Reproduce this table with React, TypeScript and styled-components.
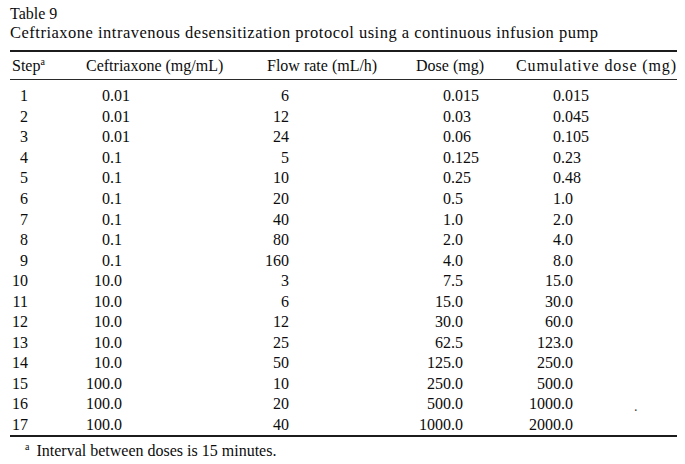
import React from "react";
import styled, { createGlobalStyle } from "styled-components";

const GlobalStyle = createGlobalStyle`
  html, body { margin: 0; padding: 0; background: #ffffff; }
  body { font-family: "Liberation Serif", "Times New Roman", serif; color: #0c0c0c; }
`;

const Page = styled.div`
  width: 685px;
  height: 464px;
  box-sizing: border-box;
  padding: 4px 0 0 10px;
  overflow: hidden;
  font-size: 16px;
`;

const Title = styled.div`
  line-height: 19px;
`;

const Caption = styled.div`
  line-height: 19px;
  font-size: 16.5px;
  letter-spacing: 0.5px;
  white-space: nowrap;
`;

const Table = styled.div`
  width: 667px;
  margin-top: 8px;
  border-top: 2px solid #1c1c1c;
  border-bottom: 2px solid #1c1c1c;
`;

const HeaderRow = styled.div`
  display: grid;
  grid-template-columns: 76px 181px 149px 84px 1fr;
  align-items: center;
  height: 27px;
  border-bottom: 1.5px solid #2a2a2a;
  white-space: nowrap;
`;

const HeadCell = styled.div<{ $right?: boolean; $pad?: number; $spacing?: number }>`
  text-align: ${(p) => (p.$right ? "right" : "left")};
  padding-left: ${(p) => p.$pad ?? 0}px;
  letter-spacing: ${(p) => p.$spacing ?? 0}px;
`;

const Sup = styled.sup`
  font-size: 10px;
  vertical-align: 6px;
  line-height: 0;
`;

const Body = styled.div`
  padding: 6px 0 0;
`;

const Row = styled.div`
  display: flex;
  align-items: center;
  height: 20.56px;
  white-space: nowrap;
`;

const Cell = styled.div<{ $ml: number; $w: number; $end?: boolean }>`
  display: flex;
  justify-content: ${(p) => (p.$end ? "flex-end" : "flex-start")};
  margin-left: ${(p) => p.$ml}px;
  width: ${(p) => p.$w}px;
  flex: none;
`;

const Speck = styled.div`
  margin-left: 61px;
  font-size: 14px;
  color: #444;
  position: relative;
  top: 3px;
`;

const Footnote = styled.div`
  margin-top: 4px;
  line-height: 19px;
  padding-left: 15px;
  white-space: nowrap;
`;

const NoteText = styled.span`
  margin-left: 3px;
`;

type RowData = [string, string, string, string, string];

const rows: RowData[] = [
  ["1", "0.01", "6", "0.015", "0.015"],
  ["2", "0.01", "12", "0.03", "0.045"],
  ["3", "0.01", "24", "0.06", "0.105"],
  ["4", "0.1", "5", "0.125", "0.23"],
  ["5", "0.1", "10", "0.25", "0.48"],
  ["6", "0.1", "20", "0.5", "1.0"],
  ["7", "0.1", "40", "1.0", "2.0"],
  ["8", "0.1", "80", "2.0", "4.0"],
  ["9", "0.1", "160", "4.0", "8.0"],
  ["10", "10.0", "3", "7.5", "15.0"],
  ["11", "10.0", "6", "15.0", "30.0"],
  ["12", "10.0", "12", "30.0", "60.0"],
  ["13", "10.0", "25", "62.5", "123.0"],
  ["14", "10.0", "50", "125.0", "250.0"],
  ["15", "100.0", "10", "250.0", "500.0"],
  ["16", "100.0", "20", "500.0", "1000.0"],
  ["17", "100.0", "40", "1000.0", "2000.0"],
];

// anchor boxes: margin from previous box, width; small values sit on the left
// of the anchor, larger ones end at its right edge
const cols = [
  { ml: 10, w: 8, alwaysEnd: true },
  { ml: 74, w: 20, alwaysEnd: false },
  { ml: 147, w: 20, alwaysEnd: true },
  { ml: 154, w: 20, alwaysEnd: false },
  { ml: 90, w: 20, alwaysEnd: false },
];

export default function App() {
  return (
    <>
      <GlobalStyle />
      <Page>
        <Title>Table 9</Title>
        <Caption>Ceftriaxone intravenous desensitization protocol using a continuous infusion pump</Caption>
        <Table>
          <HeaderRow>
            <HeadCell $pad={2}>
              Step<Sup>a</Sup>
            </HeadCell>
            <HeadCell>Ceftriaxone (mg/mL)</HeadCell>
            <HeadCell>Flow rate (mL/h)</HeadCell>
            <HeadCell>Dose (mg)</HeadCell>
            <HeadCell $right $spacing={0.9}>
              Cumulative dose (mg)
            </HeadCell>
          </HeaderRow>
          <Body>
            {rows.map((r, i) => (
              <Row key={r[0]}>
                {r.map((v, j) => (
                  <Cell key={j} $ml={cols[j].ml} $w={cols[j].w} $end={cols[j].alwaysEnd || i >= 9}>
                    {v}
                  </Cell>
                ))}
                {r[0] === "16" && <Speck>.</Speck>}
              </Row>
            ))}
          </Body>
        </Table>
        <Footnote>
          <Sup>a</Sup>
          <NoteText> Interval between doses is 15 minutes.</NoteText>
        </Footnote>
      </Page>
    </>
  );
}
